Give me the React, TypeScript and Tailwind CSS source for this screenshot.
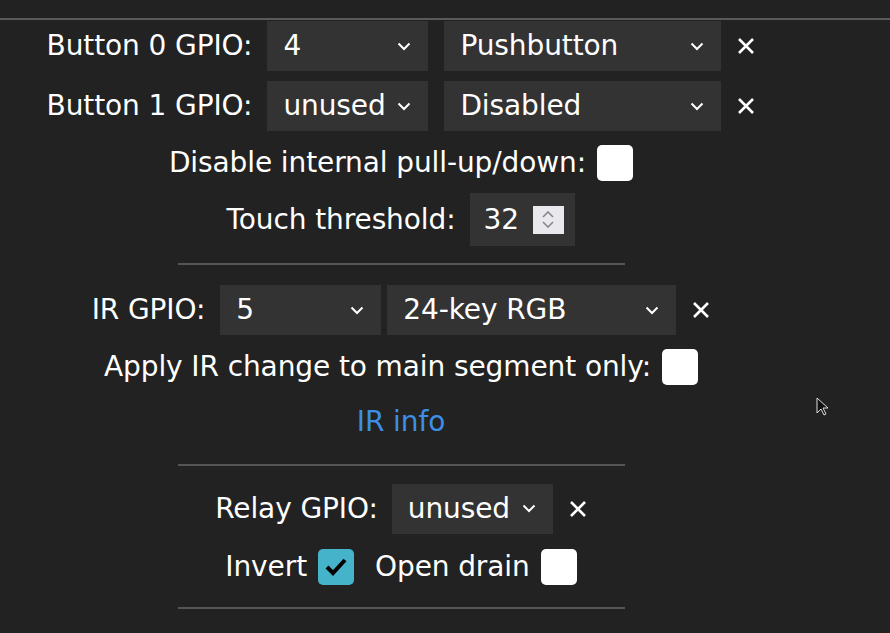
const font = { fontFamily: '"DejaVu Sans", Verdana, sans-serif' };

function Chevron() {
  return (
    <svg width="14" height="9" viewBox="0 0 14 9" className="shrink-0">
      <path d="M1.5 1.5 L7 7 L12.5 1.5" fill="none" stroke="#fff" strokeWidth="2" />
    </svg>
  );
}

function Select({ value, w }: { value: string; w: string }) {
  return (
    <div className={`flex h-[50px] items-center justify-between bg-[#333] pl-[16px] pr-[17px] ${w}`}>
      <span>{value}</span>
      <Chevron />
    </div>
  );
}

function Close() {
  return (
    <svg width="18" height="18" viewBox="0 0 18 18" className="ml-[16px] shrink-0">
      <path d="M2 2 L16 16 M16 2 L2 16" stroke="#fff" strokeWidth="2.6" />
    </svg>
  );
}

function Check({ on }: { on?: boolean }) {
  return on ? (
    <div className="flex h-[36px] w-[36px] items-center justify-center rounded-[5px] bg-[#45b3c9]">
      <svg width="24" height="20" viewBox="0 0 24 20">
        <path d="M3 10 L9 16 L21 3" fill="none" stroke="#000" strokeWidth="4" />
      </svg>
    </div>
  ) : (
    <div className="h-[36px] w-[36px] rounded-[5px] bg-white" />
  );
}

function Hr({ mt }: { mt: string }) {
  return <div className={`mx-auto h-[2px] w-[447px] bg-[#555] ${mt}`} />;
}

export default function App() {
  return (
    <div className="relative h-[633px] w-[890px] overflow-hidden bg-[#222] text-[28px] tracking-[-0.1px] text-white" style={font}>
      <div className="h-[18px]" />
      <div className="h-[2px] bg-[#5a5a5a]" />
      <div className="w-[802px] leading-none">
        <div className="flex h-[50px] items-center justify-center pt-[2px]">
          <span className="mr-[15px]">Button 0 GPIO:</span>
          <Select value="4" w="w-[161px]" />
          <div className="w-[16px]" />
          <Select value="Pushbutton" w="w-[277px]" />
          <Close />
        </div>
        <div className="mt-[10px] flex h-[50px] items-center justify-center pt-[2px]">
          <span className="mr-[15px]">Button 1 GPIO:</span>
          <Select value="unused" w="w-[161px]" />
          <div className="w-[16px]" />
          <Select value="Disabled" w="w-[277px]" />
          <Close />
        </div>
        <div className="mt-[10px] flex h-[46px] items-center justify-center gap-[11px]">
          <span>Disable internal pull-up/down:</span>
          <Check />
        </div>
        <div className="mt-[7px] flex h-[53px] items-center justify-center gap-[15px]">
          <span>Touch threshold:</span>
          <div className="flex h-[53px] w-[105px] items-center bg-[#333] pl-[13px]">
            <span>32</span>
            <div className="ml-[14px] flex h-[28px] w-[31px] flex-col items-center justify-center gap-[3px] bg-[#e9e9ed]">
              <svg width="12" height="7" viewBox="0 0 12 7">
                <path d="M1 6 L6 1 L11 6" fill="none" stroke="#888" strokeWidth="1.6" />
              </svg>
              <svg width="12" height="7" viewBox="0 0 12 7">
                <path d="M1 1 L6 6 L11 1" fill="none" stroke="#888" strokeWidth="1.6" />
              </svg>
            </div>
          </div>
        </div>
        <Hr mt="mt-[17px]" />
        <div className="mt-[18px] flex h-[52px] items-center justify-center pt-[2px]">
          <span className="mr-[15px]">IR GPIO:</span>
          <Select value="5" w="w-[161px]" />
          <div className="w-[6px]" />
          <Select value="24-key RGB" w="w-[289px]" />
          <Close />
        </div>
        <div className="mt-[9px] flex h-[46px] items-center justify-center gap-[11px]">
          <span>Apply IR change to main segment only:</span>
          <Check />
        </div>
        <div className="mt-[10px] flex h-[42px] items-center justify-center pt-[2px]">
          <a className="text-[#3d8ee6]">IR info</a>
        </div>
        <Hr mt="mt-[22px]" />
        <div className="mt-[16px] flex h-[53px] items-center justify-center">
          <span className="mr-[14px]">Relay GPIO:</span>
          <Select value="unused" w="w-[161px]" />
          <Close />
        </div>
        <div className="mt-[9px] flex h-[46px] items-center justify-center">
          <span className="mr-[11px]">Invert</span>
          <Check on />
          <span className="ml-[21px] mr-[11px]">Open drain</span>
          <Check />
        </div>
        <Hr mt="mt-[17px]" />
      </div>
      <svg width="14" height="20" viewBox="0 0 14 20" className="absolute left-[816px] top-[397px]">
        <path d="M1 1 L1 16 L5 12 L8 18 L10 17 L7 11 L12 11 Z" fill="#111" stroke="#ddd" strokeWidth="1" />
      </svg>
    </div>
  );
}
